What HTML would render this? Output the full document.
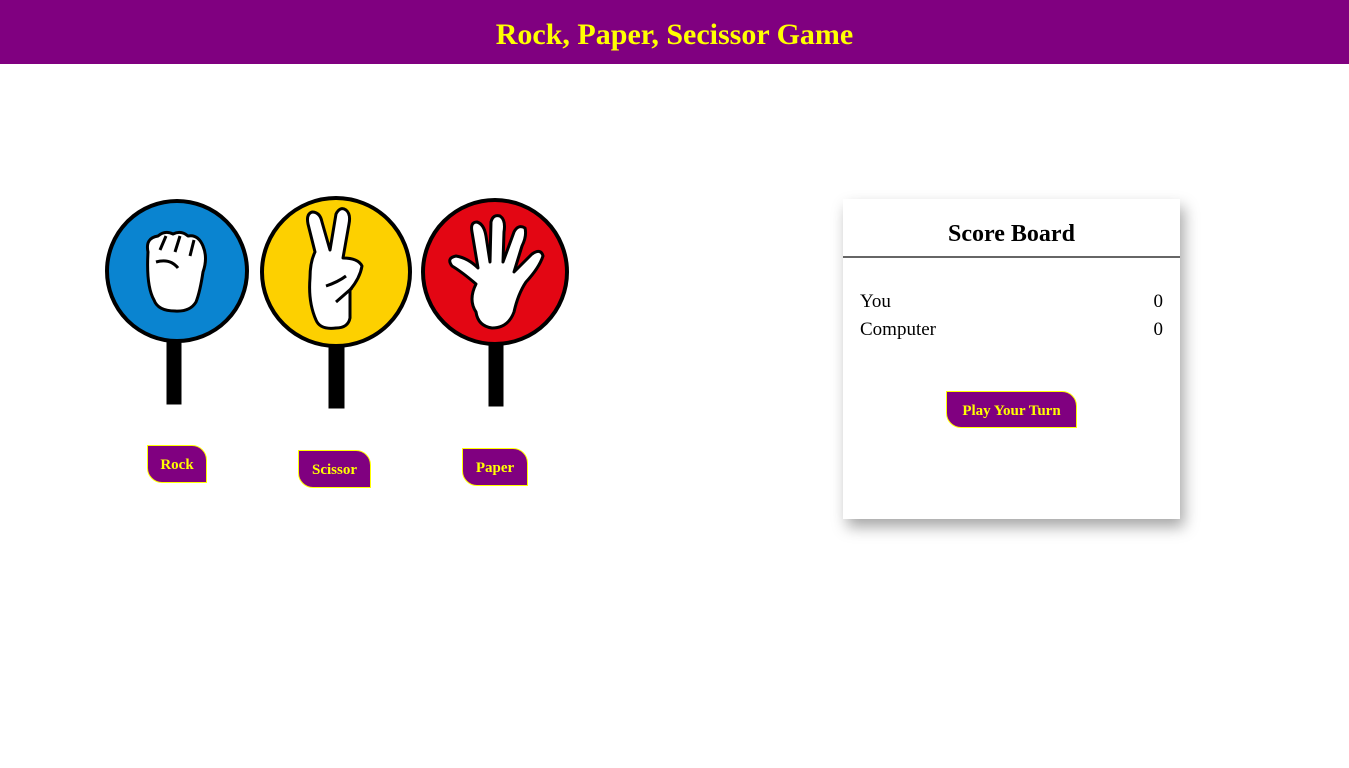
<!DOCTYPE html>
<html><head><style>
body{margin:0;width:1349px;height:768px;position:relative;font-family:"Liberation Serif",serif;background:#fff;overflow:hidden}
.hdr{position:absolute;left:0;top:0;width:1349px;height:64px;background:#800080;color:#ff0;font-weight:bold;font-size:30px;text-align:center;line-height:70px}
.btn{position:absolute;background:#800080;color:#ff0;border:1px solid #ff0;font-weight:bold;font-size:15px;border-radius:0 15px 0 15px;box-sizing:border-box;display:flex;align-items:center;justify-content:center;padding-top:3px}
.card{position:absolute;left:843px;top:199px;width:337px;height:320px;background:#fff;box-shadow:4px 8px 14px rgba(0,0,0,.35)}
.card h2{margin:0;font-size:24px;text-align:center;position:absolute;top:22px;width:100%}
.line{position:absolute;left:0;top:57px;width:100%;height:2px;background:#666}
.row{position:absolute;left:17px;right:17px;font-size:19px;display:flex;justify-content:space-between}
</style></head><body>
<div class="hdr">Rock, Paper, Secissor Game</div>
<svg width="700" height="500" style="position:absolute;left:0;top:0">
<g stroke="#000">
<rect x="167" y="338" width="14" height="66" fill="#000"/>
<rect x="329" y="344" width="15" height="64" fill="#000"/>
<rect x="489" y="342" width="14" height="64" fill="#000"/>
<circle cx="177" cy="271" r="70" fill="#0a84d0" stroke-width="4"/>
<circle cx="336" cy="272" r="74" fill="#fdd000" stroke-width="4"/>
<circle cx="495" cy="272" r="72" fill="#e30613" stroke-width="4"/>
<g fill="#fff" stroke-width="3" stroke-linejoin="round">
<path d="M148 252 Q145 238 158 236 Q165 230 173 234 Q181 230 188 236 Q198 234 203 246 Q208 258 203 272 Q200 292 196 302 Q190 312 175 311 Q158 311 154 300 Q146 286 148 252Z"/>
<path d="M160 250 L166 236 M175 252 L180 236 M190 256 L194 240 M156 262 Q170 258 178 268" fill="none"/>
<path d="M315 252 L308 224 Q306 214 312 212 Q320 212 322 222 L330 250 L336 214 Q340 206 346 210 Q351 214 349 224 L343 258 Q358 258 362 266 Q360 278 350 290 L350 318 Q348 328 336 328 Q320 330 316 320 Q308 302 310 278 Q310 262 315 252Z"/>
<path d="M326 286 Q338 282 346 276 M336 302 L352 288" fill="none"/>
<path d="M476 284 Q462 272 452 266 Q446 258 456 256 Q468 258 478 268 L472 232 Q470 222 477 222 Q484 224 486 236 L490 262 L491 222 Q493 214 500 216 Q506 220 504 232 L503 262 L514 232 Q518 224 525 228 Q527 236 522 246 L514 272 L532 254 Q541 248 543 256 Q539 268 526 282 Q518 294 514 312 Q508 328 492 328 Q478 326 476 312 Q468 300 476 284Z"/>
</g></g></svg>
<div class="btn" style="left:147px;top:445px;width:60px;height:38px">Rock</div>
<div class="btn" style="left:298px;top:450px;width:73px;height:38px">Scissor</div>
<div class="btn" style="left:462px;top:448px;width:66px;height:38px">Paper</div>
<div class="card">
<h2>Score Board</h2><div class="line"></div>
<div class="row" style="top:92px"><span>You</span><span>0</span></div>
<div class="row" style="top:120px"><span>Computer</span><span>0</span></div>
<div class="btn" style="left:103px;top:192px;width:131px;height:37px">Play Your Turn</div>
</div>
</body></html>
